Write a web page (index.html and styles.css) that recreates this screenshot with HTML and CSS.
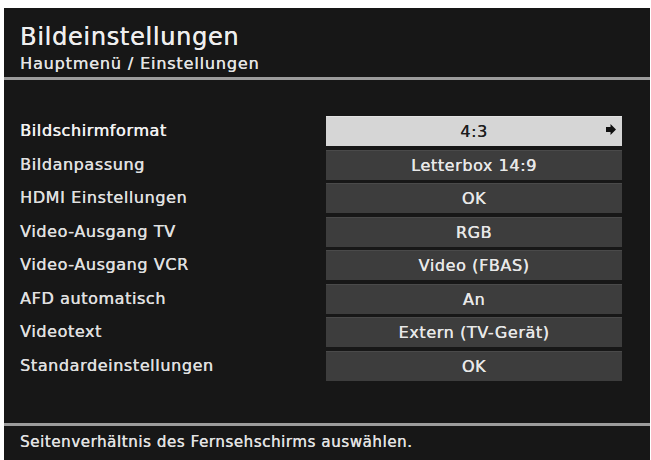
FILE: index.html
```html
<!DOCTYPE html>
<html lang="de">
<head>
<meta charset="utf-8">
<title>Bildeinstellungen</title>
<link rel="stylesheet" href="styles.css">
</head>
<body>
<div class="screen">
  <header class="header">
    <div class="title">Bildeinstellungen</div>
    <div class="subtitle">Hauptmenü / Einstellungen</div>
  </header>
  <main class="menu">
    <div class="label selected-label">Bildschirmformat</div>
    <div class="value selected">4:3
      <svg class="arrow" viewBox="0 0 10 11" width="10" height="11"><polygon points="0,3 4.5,3 4.5,0 10,5.5 4.5,11 4.5,8 0,8"/></svg>
    </div>
    <div class="label">Bildanpassung</div>
    <div class="value">Letterbox 14:9</div>
    <div class="label">HDMI Einstellungen</div>
    <div class="value">OK</div>
    <div class="label">Video-Ausgang TV</div>
    <div class="value">RGB</div>
    <div class="label">Video-Ausgang VCR</div>
    <div class="value">Video (FBAS)</div>
    <div class="label">AFD automatisch</div>
    <div class="value">An</div>
    <div class="label">Videotext</div>
    <div class="value">Extern (TV-Gerät)</div>
    <div class="label">Standardeinstellungen</div>
    <div class="value">OK</div>
  </main>
  <footer class="footer">Seitenverhältnis des Fernsehschirms auswählen.</footer>
</div>
</body>
</html>
```

FILE: styles.css
```css
html, body {
  margin: 0;
  padding: 0;
  background: #ffffff;
}
body {
  font-family: "DejaVu Sans", "Liberation Sans", sans-serif;
  overflow: hidden;
}
.screen {
  margin: 8px 1px 0 4px;
  height: 452px;
  background: #171717;
  display: flex;
  flex-direction: column;
  color: #e2e2e2;
}
.header {
  padding: 16px 0 3px 16px;
  border-bottom: 3px solid #9c9c9c;
}
.title {
  font-size: 24px;
  line-height: 26px;
  letter-spacing: 0.7px;
  color: #eeeeee;
  text-shadow: 0.3px 0 0 #eeeeee;
}
.subtitle {
  margin-top: 4px;
  font-size: 16px;
  line-height: 20px;
  letter-spacing: 0.85px;
  color: #e4e4e4;
  text-shadow: 0.3px 0 0 #e4e4e4;
}
.menu {
  height: 307px;
  padding: 36px 0 0 16px;
  display: grid;
  grid-template-columns: 306px 296px;
  grid-auto-rows: 30px;
  row-gap: 3.5px;
  align-content: start;
}
.label {
  font-size: 16px;
  line-height: 30px;
  letter-spacing: 0.6px;
  color: #e0e0e0;
  text-shadow: 0.3px 0 0 #e0e0e0;
}
.selected-label {
  color: #f2f2f2;
  text-shadow: 0.5px 0 0 #f2f2f2;
}
.value {
  position: relative;
  background: #3d3d3d;
  border-top: 1px solid #4a4a4a;
  box-sizing: border-box;
  text-align: center;
  font-size: 16px;
  line-height: 29px;
  letter-spacing: 0.6px;
  color: #e8e8e8;
  text-shadow: 0.3px 0 0 #e8e8e8;
}
.value.selected {
  background: #d6d6d6;
  border-top-color: #e2e2e2;
  color: #1e1e1e;
  text-shadow: 0.3px 0 0 #1e1e1e;
}
.arrow {
  position: absolute;
  right: 6px;
  top: 7px;
  fill: #111111;
}
.footer {
  border-top: 3px solid #9c9c9c;
  padding: 6px 0 0 16px;
  font-size: 15px;
  line-height: 20px;
  letter-spacing: 0.6px;
  color: #e2e2e2;
  text-shadow: 0.3px 0 0 #e2e2e2;
}
```
